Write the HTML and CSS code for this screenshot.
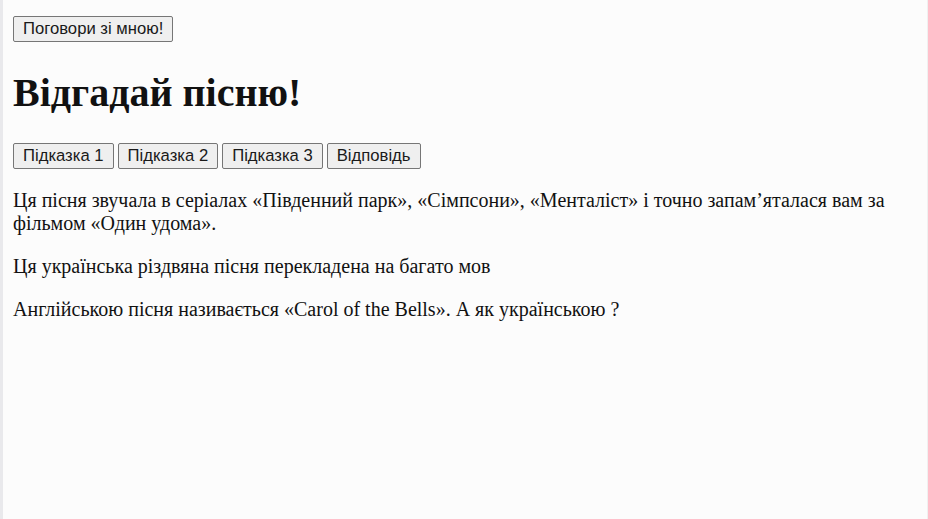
FILE: index.html
```
<!DOCTYPE html>
<html lang="uk">
<head>
  <meta charset="UTF-8">
  <title>Відгадай пісню!</title>
  <link rel="stylesheet" href="styles.css">
</head>
<body>
  <div class="page">
    <div class="top">
      <button class="btn">Поговори зі мною!</button>
    </div>

    <h1>Відгадай пісню!</h1>

    <div class="hints">
      <button class="btn">Підказка 1</button>
      <button class="btn">Підказка 2</button>
      <button class="btn">Підказка 3</button>
      <button class="btn">Відповідь</button>
    </div>

    <p>Ця пісня звучала в серіалах «Південний парк», «Сімпсони», «Менталіст» і точно запам’яталася вам за фільмом «Один удома».</p>
    <p>Ця українська різдвяна пісня перекладена на багато мов</p>
    <p>Англійською пісня називається «Carol of the Bells». А як українською ?</p>
  </div>
</body>
</html>
```
FILE: styles.css
```
html, body {
  margin: 0;
  height: 100%;
  background-color: #fcfcfc;
}

.page {
  box-sizing: border-box;
  min-height: 100%;
  border-left: 3px solid #e9e9ec;
  border-right: 1px solid #f0f0f0;
  padding: 16px 10px 10px 10px;
  font-family: "Liberation Serif", "Times New Roman", serif;
  font-size: 20px;
  color: #111;
}

.top {
  display: flex;
}

.btn {
  font-family: "Liberation Sans", Arial, sans-serif;
  font-size: 16.67px;
  line-height: 20px;
  color: #1a1a1a;
  background-color: #efefef;
  border: 1px solid #767676;
  border-radius: 2px;
  padding: 2px 9px;
  margin: 0;
}

h1 {
  font-size: 40px;
  margin: 27px 0;
}

.hints {
  display: flex;
  gap: 4px;
}

p {
  margin: 20px 0;
}
```
